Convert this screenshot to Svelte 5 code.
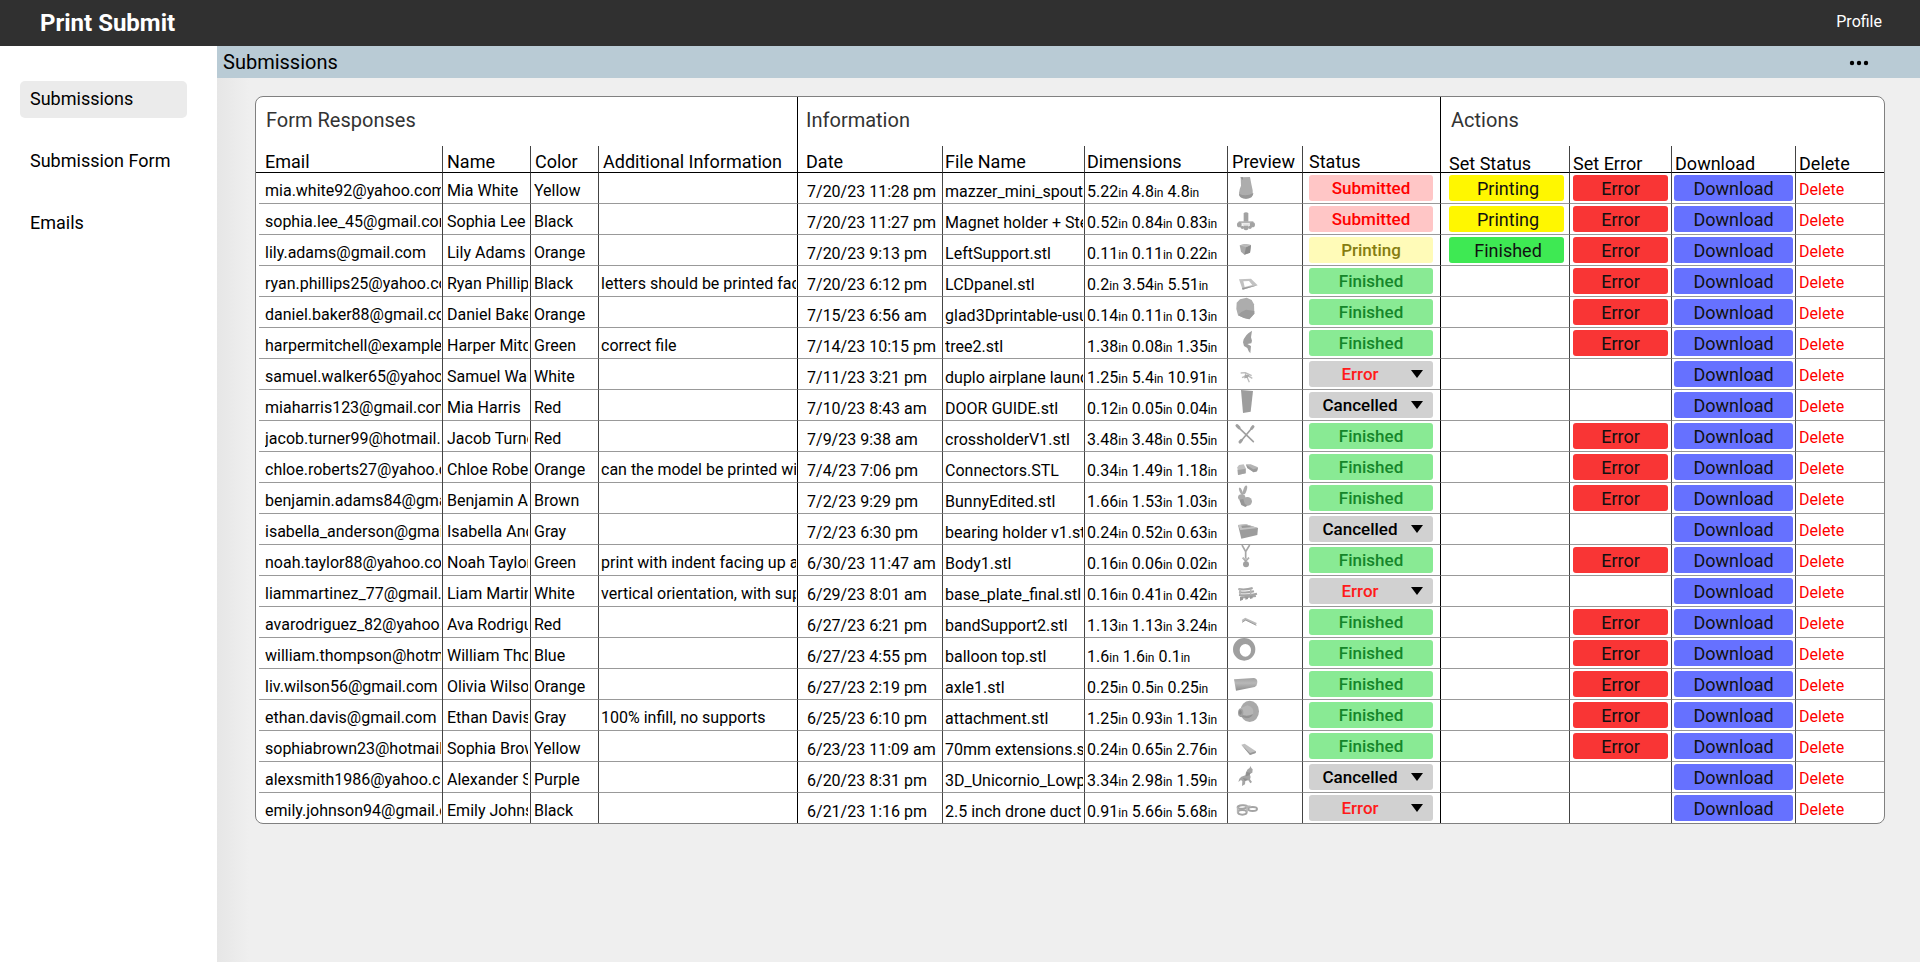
<script lang="ts">
  const columns = [
    { label: 'Email', width: 187, kind: 'email' },
    { label: 'Name', width: 88, kind: 'name' },
    { label: 'Color', width: 68, kind: 'color' },
    { label: 'Additional Information', width: 199, kind: 'notes edge' },
    { label: 'Date', width: 145, kind: 'date' },
    { label: 'File Name', width: 142, kind: 'file' },
    { label: 'Dimensions', width: 143, kind: 'dims' },
    { label: 'Preview', width: 75, kind: 'preview' },
    { label: 'Status', width: 138, kind: 'status edge' },
    { label: 'Set Status', width: 129, kind: 'set-status act' },
    { label: 'Set Error', width: 102, kind: 'set-error act' },
    { label: 'Download', width: 124, kind: 'download act' },
    { label: 'Delete', width: 88, kind: 'delete act' }
  ];

  const data: string[][] = [
    ['mia.white92@yahoo.com', 'Mia White', 'Yellow', '', '7/20/23 11:28 pm', 'mazzer_mini_spout-', '5.22 4.8 4.8', 'Submitted'],
    ['sophia.lee_45@gmail.com', 'Sophia Lee', 'Black', '', '7/20/23 11:27 pm', 'Magnet holder + Ste', '0.52 0.84 0.83', 'Submitted'],
    ['lily.adams@gmail.com', 'Lily Adams', 'Orange', '', '7/20/23 9:13 pm', 'LeftSupport.stl', '0.11 0.11 0.22', 'Printing'],
    ['ryan.phillips25@yahoo.com', 'Ryan Phillips', 'Black', 'letters should be printed fac', '7/20/23 6:12 pm', 'LCDpanel.stl', '0.2 3.54 5.51', 'Finished'],
    ['daniel.baker88@gmail.com', 'Daniel Baker', 'Orange', '', '7/15/23 6:56 am', 'glad3Dprintable-usu', '0.14 0.11 0.13', 'Finished'],
    ['harpermitchell@example.com', 'Harper Mitchell', 'Green', 'correct file', '7/14/23 10:15 pm', 'tree2.stl', '1.38 0.08 1.35', 'Finished'],
    ['samuel.walker65@yahoo.com', 'Samuel Walker', 'White', '', '7/11/23 3:21 pm', 'duplo airplane launc', '1.25 5.4 10.91', 'Error'],
    ['miaharris123@gmail.com', 'Mia Harris', 'Red', '', '7/10/23 8:43 am', 'DOOR GUIDE.stl', '0.12 0.05 0.04', 'Cancelled'],
    ['jacob.turner99@hotmail.com', 'Jacob Turner', 'Red', '', '7/9/23 9:38 am', 'crossholderV1.stl', '3.48 3.48 0.55', 'Finished'],
    ['chloe.roberts27@yahoo.com', 'Chloe Roberts', 'Orange', 'can the model be printed wi', '7/4/23 7:06 pm', 'Connectors.STL', '0.34 1.49 1.18', 'Finished'],
    ['benjamin.adams84@gmail.com', 'Benjamin Adams', 'Brown', '', '7/2/23 9:29 pm', 'BunnyEdited.stl', '1.66 1.53 1.03', 'Finished'],
    ['isabella_anderson@gmail.com', 'Isabella Anderson', 'Gray', '', '7/2/23 6:30 pm', 'bearing holder v1.stl', '0.24 0.52 0.63', 'Cancelled'],
    ['noah.taylor88@yahoo.com', 'Noah Taylor', 'Green', 'print with indent facing up a', '6/30/23 11:47 am', 'Body1.stl', '0.16 0.06 0.02', 'Finished'],
    ['liammartinez_77@gmail.com', 'Liam Martinez', 'White', 'vertical orientation, with sup', '6/29/23 8:01 am', 'base_plate_final.stl', '0.16 0.41 0.42', 'Error'],
    ['avarodriguez_82@yahoo.com', 'Ava Rodriguez', 'Red', '', '6/27/23 6:21 pm', 'bandSupport2.stl', '1.13 1.13 3.24', 'Finished'],
    ['william.thompson@hotmail.com', 'William Thompson', 'Blue', '', '6/27/23 4:55 pm', 'balloon top.stl', '1.6 1.6 0.1', 'Finished'],
    ['liv.wilson56@gmail.com', 'Olivia Wilson', 'Orange', '', '6/27/23 2:19 pm', 'axle1.stl', '0.25 0.5 0.25', 'Finished'],
    ['ethan.davis@gmail.com', 'Ethan Davis', 'Gray', '100% infill, no supports', '6/25/23 6:10 pm', 'attachment.stl', '1.25 0.93 1.13', 'Finished'],
    ['sophiabrown23@hotmail.com', 'Sophia Brown', 'Yellow', '', '6/23/23 11:09 am', '70mm extensions.s', '0.24 0.65 2.76', 'Finished'],
    ['alexsmith1986@yahoo.com', 'Alexander Smith', 'Purple', '', '6/20/23 8:31 pm', '3D_Unicornio_Lowp', '3.34 2.98 1.59', 'Cancelled'],
    ['emily.johnson94@gmail.com', 'Emily Johnson', 'Black', '', '6/21/23 1:16 pm', '2.5 inch drone duct', '0.91 5.66 5.68', 'Error']
  ];

  const rows = data.map(([email, name, color, notes, date, file, dims, status]) => ({
    email, name, color, notes, date, file, dims: dims.split(' '), status
  }));

  const nextStatus: Record<string, string> = { Submitted: 'Printing', Printing: 'Finished' };
  const closed = (status: string) => status === 'Error' || status === 'Cancelled';
</script>

{#snippet model(i: number)}
  <svg class="model" viewBox="24 0 96 90" aria-hidden="true">
    {#if i === 0}
      <path d="M62 13 L90 12 Q94 34 98 52 Q102 77 78 77 Q55 76 57 60 Q58 48 63 38Z" fill="#adadad" />
      <path d="M57 62 Q78 72 100 60 Q100 77 78 77 Q57 76 57 62Z" fill="#989898" />
      <path d="M61 13h8l-1 8z" fill="#8f8f8f" />
    {:else if i === 1}
      <path d="M71 27 Q78 23 85 27 V54 H71Z" fill="#a2a2a2" />
      <path d="M56 52 H100 V58 H56Z" fill="#b4b4b4" />
      <g fill="#a3a3a3">
        <ellipse cx="58" cy="62" rx="7" ry="8" /><ellipse cx="97" cy="62" rx="8" ry="8" />
        <ellipse cx="78" cy="70" rx="8" ry="9" /><circle cx="67" cy="70" r="5" /><circle cx="90" cy="70" r="5" />
      </g>
      <path d="M67 60 h22 l-4 5 h-14z" fill="#e2e2e2" />
    {:else if i === 2}
      <path d="M59 31 L75 27 L93 30 L90 53 L73 59 L63 50Z" fill="#a9a9a9" />
      <path d="M78 37 L93 30 L90 53 L73 59Z" fill="#8b8b8b" />
      <path d="M59 31 L75 27 L93 30 L78 37Z" fill="#bcbcbc" />
    {:else if i === 3}
      <path fill-rule="evenodd" d="M57 40 L93 38 L113 58 L68 71Z M70 46 L74 63 L97 57 L87 45Z" fill="#c2c2c2" />
      <path d="M66 66 L113 58 L68 71Z" fill="#999" />
    {:else if i === 4}
      <path d="M50 17 L60 7 L80 2 L95 9 L102 22 L103 50 L88 67 L72 63 L54 55 L49 36Z" fill="#adadad" />
      <path d="M64 45 L78 38 L103 42 L103 50 L88 67 L72 63 L54 55Z" fill="#9b9b9b" />
    {:else if i === 5}
      <path d="M96 8 L85 16 L79 22 L71 34 L69 43 L72 54 L82 60 L86 70 L91 76 L93 54 L82 48 L94 46 L96 38 L93 28Z" fill="#9f9f9f" />
    {:else if i === 6}
      <g fill="none" stroke="#bcbcbc" stroke-width="4"><path d="M62 42 L76 41 L95 50 M66 56 L82 49 L97 58 M78 42 L74 58 M82 56 L88 70" /></g>
      <path d="M74 48 h14 l-5 9 h-8z" fill="#aaa" />
    {:else if i === 7}
      <path d="M63 0 L99 3 L92 65 L69 69Z" fill="#9d9d9d" />
    {:else if i === 8}
      <g fill="none" stroke="#a0a0a0" stroke-linecap="round"><path d="M50 14 L100 62 M99 17 L60 64" stroke-width="5" /><path d="M51 14 l6 6 M99 17 l-4 5 M60 63 l4 -5" stroke-width="9" /></g>
    {:else if i === 9}
      <path d="M52 46 L57 39 L71 37 L77 49 V64 L54 69Z" fill="#c0c0c0" /><path d="M53 54 L77 50 V64 L54 69Z" fill="#a2a2a2" />
      <path d="M78 37 L92 37 L114 46 L111 58 L101 61 L82 48Z" fill="#b3b3b3" /><path d="M78 38 L100 52 L114 48 L111 58 L101 61 L82 48Z" fill="#9a9a9a" />
    {:else if i === 10}
      <g fill="#ababab"><ellipse cx="63" cy="25" rx="4" ry="12" transform="rotate(-24 63 25)" /><ellipse cx="75" cy="21" rx="5" ry="14" transform="rotate(18 75 21)" /><ellipse cx="65" cy="43" rx="11" ry="9" /><ellipse cx="82" cy="55" rx="14" ry="13" /></g>
      <path d="M58 50 l12 -2 4 14 8 6 -6 4 -12 -6z" fill="#969696" />
    {:else if i === 11}
      <path d="M54 33 L78 31 L114 42 L112 63 L64 74Z" fill="#9c9c9c" />
      <path d="M54 33 L78 31 L114 42 L61 48Z" fill="#c3c3c3" /><path d="M64 35 L80 34 L98 39 L66 42Z" fill="#999" />
    {:else if i === 12}
      <path d="M66 0 L77 20 L89 0 M77 20 V57 M68 38 L77 48 L87 38" fill="none" stroke="#a6a6a6" stroke-width="5" />
      <path d="M67 39 h20 l-9 7z" fill="#c0c0c0" /><circle cx="78" cy="58" r="9" fill="#a0a0a0" />
    {:else if i === 13}
      <g fill="none" stroke="#a5a5a5" stroke-width="6"><path d="M55 39 Q76 43 98 36 M57 48 Q80 52 102 46 M57 57 Q84 60 111 53 M62 65 L108 60" /></g>
      <path d="M60 62 v13 l9 -4 v-9z M76 62 v9 l8 -2 v-7z M90 60 v9 l8 -2 v-8z" fill="#999" /><path d="M60 38 v18 M92 38 v18" stroke="#b5b5b5" stroke-width="5" />
    {:else if i === 14}
      <path d="M67 42 L76 36 L109 51" fill="none" stroke="#bbb" stroke-width="7" /><path d="M66 46 L77 39 L109 55" fill="none" stroke="#9b9b9b" stroke-width="3" />
    {:else if i === 15}
      <path fill-rule="evenodd" d="M39 34 A33.500 34 0 1 1 106 34 A33.500 34 0 1 1 39 34Z M59 37 A17 19 0 1 0 93 37 A17 19 0 1 0 59 37Z" fill="#9f9f9f" />
    {:else if i === 16}
      <linearGradient id="axle" x1="0" y1="0" x2="0" y2="1"><stop offset="0" stop-color="#a2a2a2" /><stop offset=".4" stop-color="#b8b8b8" /><stop offset="1" stop-color="#8e8e8e" /></linearGradient>
      <path d="M42 31 L102 27 Q112 29 112 39 Q111 51 104 54 L48 65Z" fill="url(#axle)" />
    {:else if i === 17}
      <ellipse cx="89" cy="34" rx="28" ry="32" fill="#a9a9a9" /><path d="M58 26 L82 16 Q102 22 100 38 Q98 54 80 55 L60 50Z" fill="#b6b6b6" />
      <path d="M60 42 Q80 52 99 42 Q96 54 80 55 L60 50Z" fill="#929292" /><ellipse cx="62" cy="38" rx="8" ry="12" fill="#a1a1a1" /><ellipse cx="61" cy="37" rx="4" ry="7" fill="#8a8a8a" />
    {:else if i === 18}
      <path d="M64 41 L74 38 L108 61 L107 66 L90 72Z" fill="#c0c0c0" /><path d="M64 41 L90 66 L108 61 L107 66 L90 72Z" fill="#989898" />
    {:else if i === 19}
      <path d="M92 12 L94 18 L98 22 L97 32 L89 36 L92 45 L90 52 L96 60 L91 64 L85 55 L76 57 L75 67 L66 72 L67 58 L63 54 L55 60 L58 50 L64 44 L76 40 L78 31 L83 22 L88 19Z" fill="#a5a5a5" />
      <path d="M80 30 l12 3 -4 7 -11 3z M68 48 l16 3 -9 6z" fill="#8f8f8f" />
    {:else}
      <g fill="none" stroke="#a4a4a4" stroke-width="6"><ellipse cx="67" cy="42" rx="14" ry="5" transform="rotate(-4 67 42)" /><ellipse cx="98" cy="48" rx="13" ry="6" /><ellipse cx="67" cy="58" rx="13" ry="7" /></g>
      <path d="M53 43 v16 M81 42 v14 M76 40 l16 0" stroke="#b6b6b6" stroke-width="5" />
    {/if}
  </svg>
{/snippet}

<div class="page">
  <header class="top">
    <h1>Print Submit</h1>
    <a href="#profile">Profile</a>
  </header>
  <div class="body">
    <nav>
      <a class="active" href="#submissions">Submissions</a>
      <a href="#form">Submission Form</a>
      <a href="#emails">Emails</a>
    </nav>
    <main>
      <div class="titlebar">
        <h2>Submissions</h2>
        <button class="more" aria-label="More options">
          <svg viewBox="0 0 20 6" aria-hidden="true"><circle cx="3" cy="3" r="2.2" /><circle cx="10" cy="3" r="2.2" /><circle cx="17" cy="3" r="2.2" /></svg>
        </button>
      </div>
      <div class="content">
        <div class="card">
          <table>
            <colgroup>
              {#each columns as c}<col style:width="{c.width}px" />{/each}
            </colgroup>
            <thead>
              <tr class="groups">
                <th class="edge" colspan="4" scope="colgroup">Form Responses</th>
                <th class="info edge" colspan="5" scope="colgroup">Information</th>
                <th colspan="4" scope="colgroup">Actions</th>
              </tr>
              <tr class="labels">
                {#each columns as c}<th class={c.kind} scope="col">{c.label}</th>{/each}
              </tr>
            </thead>
            <tbody>
              {#each rows as r, i}
                <tr>
                  <td class="email"><span class="clip">{r.email}</span></td>
                  <td class="name"><span class="clip">{r.name}</span></td>
                  <td class="color"><span class="clip">{r.color}</span></td>
                  <td class="notes edge"><span class="clip">{r.notes}</span></td>
                  <td class="date"><span class="clip">{r.date}</span></td>
                  <td class="file"><span class="clip">{r.file}</span></td>
                  <td class="dims"><span class="clip">{#each r.dims as d, k}{k ? ' ' : ''}{d}<small>in</small>{/each}</span></td>
                  <td class="preview">{@render model(i)}</td>
                  <td class="status edge">
                    {#if closed(r.status)}
                      <div class="picker">
                        <select class={r.status.toLowerCase()} aria-label="Status" value={r.status}>
                          <option>Error</option>
                          <option>Cancelled</option>
                        </select>
                        <svg viewBox="0 0 12 8" aria-hidden="true"><path d="M0 0H12L6 8Z" /></svg>
                      </div>
                    {:else}
                      <div class="pill {r.status.toLowerCase()}">{r.status}</div>
                    {/if}
                  </td>
                  <td class="set-status">
                    {#if nextStatus[r.status]}
                      <button class="btn to-{nextStatus[r.status].toLowerCase()}">{nextStatus[r.status]}</button>
                    {/if}
                  </td>
                  <td class="set-error">
                    {#if !closed(r.status)}<button class="btn to-error">Error</button>{/if}
                  </td>
                  <td class="download"><button class="btn to-download">Download</button></td>
                  <td class="delete"><button class="remove">Delete</button></td>
                </tr>
              {/each}
            </tbody>
          </table>
        </div>
      </div>
    </main>
  </div>
</div>

<style>
  :global(body) { margin: 0; }
  .page {
    display: flex;
    flex-direction: column;
    min-height: 100vh;
    font-family: Roboto, "Liberation Sans", sans-serif;
    color: #000;
  }
  a { color: inherit; text-decoration: none; }
  button, select { font-family: inherit; border: 0; margin: 0; padding: 0; cursor: pointer; }
  h1, h2 { margin: 0; }

  .top {
    display: flex;
    align-items: center;
    justify-content: space-between;
    height: 46px;
    padding: 0 38px 0 40px;
    background: #303030;
    color: #fff;
  }
  .top h1 { font-size: 24px; font-weight: 700; line-height: 28px; }
  .top a { font-size: 16px; line-height: 20px; padding-bottom: 2px; }

  .body { display: flex; flex: 1; }
  nav {
    flex: 0 0 217px;
    box-sizing: border-box;
    display: flex;
    flex-direction: column;
    gap: 25px;
    padding: 35px 30px 0 20px;
    background: #fff;
  }
  nav a {
    padding: 7px 10px 9px;
    border-radius: 5px;
    font-size: 18px;
    line-height: 21px;
  }
  nav .active { background: #ebebeb; }

  main { flex: 1; min-width: 0; display: flex; flex-direction: column; }
  .titlebar {
    display: flex;
    align-items: center;
    justify-content: space-between;
    height: 32px;
    padding: 0 51px 0 6px;
    background: #b9cbd5;
  }
  .titlebar h2 { font-size: 20px; font-weight: 400; line-height: 24px; }
  .more { display: flex; padding: 7px 0 5px; background: none; }
  .more svg { width: 20px; height: 6px; }

  .content {
    flex: 1;
    padding: 18px 35px 40px 38px;
    background: linear-gradient(90deg, #e6e6e6, #efefef 32px);
  }
  .card {
    border: 1px solid #808080;
    border-radius: 8px;
    background: #fff;
    overflow: hidden;
  }
  table {
    width: 100%;
    table-layout: fixed;
    border-spacing: 0;
  }
  th, td { box-sizing: border-box; padding: 0; vertical-align: top; }
  th { font-weight: 400; text-align: left; white-space: nowrap; }
  .groups th {
    height: 49px;
    padding: 11px 0 0 10px;
    font-size: 20px;
    line-height: 24px;
    color: #333;
  }
  .groups .info { padding-left: 8px; }
  .labels th {
    padding-top: 8px;
    padding-bottom: 2px;
    font-size: 18px;
    line-height: 16px;
    border-bottom: 1px solid #000;
    border-right: 1px solid #444;
  }
  .labels th.act { padding-top: 10px; padding-bottom: 0; }

  td {
    height: 31px;
    border-bottom: 1px solid #999;
    border-right: 1px solid #444;
    font-size: 16px;
    line-height: 20px;
  }
  tr > .edge, .labels th.edge { border-right: 1px solid #000; }
  tr > .delete, .labels th.delete { border-right: 0; }
  tbody tr:last-child td { height: 30px; border-bottom: 0; }
  td.email {
    border-bottom: 0;
    background: linear-gradient(#999, #999) 3px 100% / 100% 1px no-repeat;
  }
  tbody tr:last-child td.email { background: none; }

  .clip { display: block; overflow: hidden; white-space: nowrap; padding-top: 8px; margin-right: 1px; }
  .date .clip, .file .clip, .dims .clip { padding-top: 9px; }
  small { font-size: 12px; }

  .email { padding-left: 9px; }
  .name { padding-left: 4px; }
  td.name { padding-right: 1px; }
  .color { padding-left: 3px; }
  .notes { padding-left: 2px; }
  .date { padding-left: 9px; }
  .file, .dims { padding-left: 2px; }
  .status { padding: 2px 7px 0 6px; }
  .set-status { padding: 2px 5px 0 8px; }
  .set-error { padding: 2px 3px 0; }
  .download { padding: 2px 2px 0; }
  .delete { padding-left: 3px; }
  .labels .color, .labels .preview { padding-left: 4px; }
  .labels .download { padding-left: 3px; }
  .labels .notes { padding-left: 4px; }
  .labels .date { padding-left: 8px; }

  .model { display: block; width: 32px; height: 30px; }

  .pill, .picker { height: 26px; border-radius: 3px; font-size: 17px; font-weight: 500; line-height: 26px; }
  .pill { text-align: center; }
  .submitted { background: #ffc6c6; color: #f00; }
  .printing { background: #fffbb8; color: #857d10; }
  .finished { background: #89ea94; color: #15862a; }
  .picker { display: grid; align-items: center; background: #d1d1d1; }
  select {
    grid-area: 1 / 1;
    appearance: none;
    width: 100%;
    height: 26px;
    padding: 0 22px 0 0;
    background: none;
    font-size: 17px;
    font-weight: 500;
    text-align: center;
    text-align-last: center;
  }
  select.error { color: #ff1a1a; }
  select.cancelled { color: #000; }
  .picker svg { grid-area: 1 / 1; justify-self: end; width: 12px; height: 8px; margin-right: 10px; pointer-events: none; }

  .btn {
    display: block;
    width: 100%;
    height: 26px;
    padding-top: 1px;
    border-radius: 3px;
    font-size: 18px;
    color: #111;
  }
  .set-status .btn { padding-left: 3px; }
  .to-printing { background: #fff700; }
  .to-finished { background: #3ee953; }
  .to-error { background: #f93535; }
  .to-download { background: #6671ff; }
  .remove { display: block; padding-top: 7px; background: none; color: #f00; font-size: 16px; line-height: 20px; }
</style>
